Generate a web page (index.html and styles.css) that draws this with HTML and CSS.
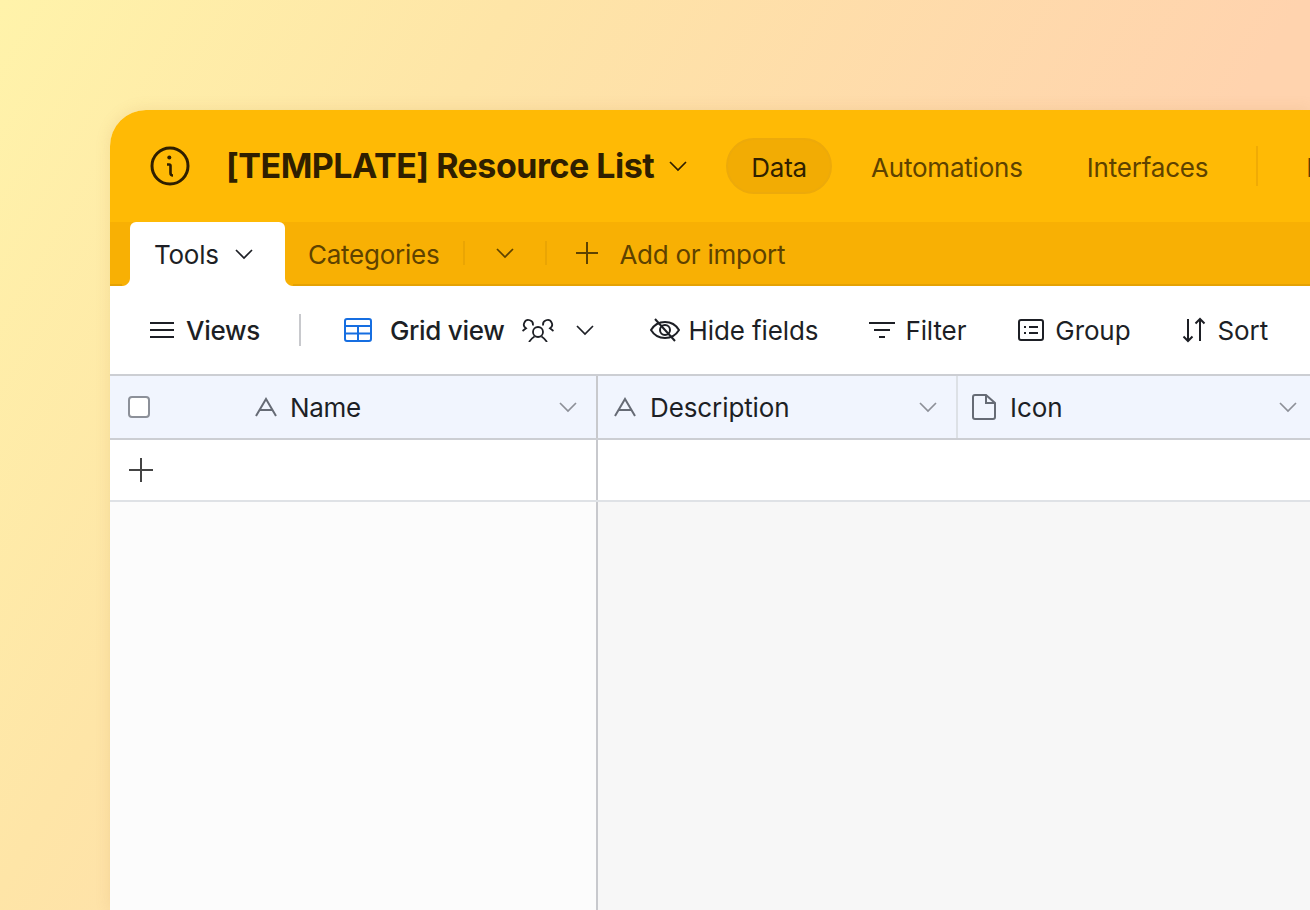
FILE: index.html
```html
<!DOCTYPE html>
<html lang="en">
<head>
    <meta charset="UTF-8">
    <title>[TEMPLATE] Resource List</title>
    <link rel="stylesheet" href="styles.css">
</head>
<body>
    <div class="app">
        <div class="topbar">
            <svg class="info-icon" width="40" height="40" viewBox="0 0 40 40" fill="none" stroke="#2f1f00" stroke-width="3"><circle cx="20" cy="20" r="18"/><path d="M17 18.500h2.300a1.200 1.200 0 0 1 1.200 1.200V27a2.500 2.500 0 0 0 2.500 2.500" stroke-width="2.600"/><circle cx="19.300" cy="11.500" r="2" fill="#2f1f00" stroke="none"/></svg>
            <h1 class="base-name">[TEMPLATE] Resource List</h1>
            <svg class="chev title-chev" width="20" height="12" viewBox="0 0 20 12"><path d="M2 2l8 8 8-8"/></svg>
            <nav class="top-nav">
                <a class="top-link active">Data</a>
                <a class="top-link">Automations</a>
                <a class="top-link">Interfaces</a>
                <span class="top-sep"></span>
                <a class="top-link">Forms</a>
            </nav>
        </div>
        <div class="tabbar">
            <div class="tab"><span>Tools</span> <svg class="chev" width="20" height="12" viewBox="0 0 20 12"><path d="M2 2l8 8 8-8"/></svg></div>
            <div class="tab-link tab-text">Categories</div>
            <span class="tab-sep"></span>
            <svg class="chev tab-more" width="20" height="12" viewBox="0 0 20 12"><path d="M2 2l8 8 8-8"/></svg>
            <span class="tab-sep"></span>
            <div class="tab-add">
                <svg width="24" height="24" viewBox="0 0 24 24" fill="none" stroke="#5e4200" stroke-width="2"><path d="M12 1v22M1 12h22"/></svg>
                <span class="tab-text">Add or import</span>
            </div>
        </div>
        <div class="toolbar">
            <div class="tool views">
                <svg width="24" height="18" viewBox="0 0 24 18" fill="none" stroke="#1d1f25" stroke-width="2"><path d="M0 2h24M0 9h24M0 16h24"/></svg>
                <b>Views</b>
            </div>
            <span class="tool-sep"></span>
            <div class="tool gridview">
                <svg width="28" height="24" viewBox="0 0 28 24" fill="none" stroke="#166ee1" stroke-width="2"><rect x="1" y="1" width="26" height="22" rx="2"/><path d="M1 8h26M1 15.500h26M14 8v15"/></svg>
                <b>Grid view</b>
                <svg class="people" width="32" height="24" viewBox="0 0 32 24" fill="none" stroke="#1d1f25" stroke-width="1.800"><circle cx="16" cy="14" r="5"/><path d="M7 24c1.500-2 3-4 5.500-5.500M25 24c-1.500-2-3-4-5.500-5.500M10.800 7.500A4.500 4.500 0 1 0 4 10.300L0.500 13M21.200 7.500A4.500 4.500 0 1 1 28 10.300L31.500 13"/></svg>
                <svg class="chev people-chev" width="20" height="12" viewBox="0 0 20 12"><path d="M2 2l8 8 8-8"/></svg>
            </div>
            <div class="tool hide">
                <svg width="30" height="26" viewBox="0 0 30 26" fill="none" stroke="#1d1f25" stroke-width="2"><path d="M1 13C4 8 9 5 15 5s11 3 14 8c-3 5-8 8-14 8S4 18 1 13z"/><circle cx="15" cy="13" r="5"/><path d="M5 2l20 22"/></svg>
                Hide fields
            </div>
            <div class="tool filter">
                <svg width="28" height="20" viewBox="0 0 28 20" fill="none" stroke="#1d1f25" stroke-width="2"><path d="M1 3h26M6 10h16M11 17h6"/></svg>
                Filter
            </div>
            <div class="tool group">
                <svg width="26" height="24" viewBox="0 0 26 24" fill="none" stroke="#1d1f25" stroke-width="2"><rect x="1" y="2" width="24" height="20" rx="2"/><path d="M6 9h2M6 15h2M11 9h9M11 15h9"/></svg>
                Group
            </div>
            <div class="tool sort">
                <svg width="24" height="26" viewBox="0 0 24 26" fill="none" stroke="#1d1f25" stroke-width="2"><path d="M6 2v22M1.500 19.500L6 24l4.500-4.500M18 24V2M13.500 6.500L18 2l4.500 4.500"/></svg>
                Sort
            </div>
        </div>
        <div class="grid-head">
            <div class="col col-name">
                <span class="checkbox"></span>
                <svg class="letter" width="22" height="20" viewBox="0 0 22 20" fill="none" stroke="#666b75" stroke-width="2"><path d="M1 19L11 2l10 17M5 13h12"/></svg>
                <span class="col-title">Name</span>
                <svg class="chev col-chev" width="20" height="12" viewBox="0 0 20 12"><path d="M2 2l8 8 8-8"/></svg>
            </div>
            <div class="col col-desc">
                <svg class="letter" width="22" height="20" viewBox="0 0 22 20" fill="none" stroke="#666b75" stroke-width="2"><path d="M1 19L11 2l10 17M5 13h12"/></svg>
                <span class="col-title">Description</span>
                <svg class="chev col-chev" width="20" height="12" viewBox="0 0 20 12"><path d="M2 2l8 8 8-8"/></svg>
            </div>
            <div class="col col-icon">
                <svg class="letter" width="24" height="26" viewBox="0 0 24 26" fill="none" stroke="#666b75" stroke-width="2"><path d="M3 1h11l9 8v14a2 2 0 0 1-2 2H3a2 2 0 0 1-2-2V3a2 2 0 0 1 2-2zM14 1v8h9"/></svg>
                <span class="col-title">Icon</span>
                <svg class="chev col-chev" width="20" height="12" viewBox="0 0 20 12"><path d="M2 2l8 8 8-8"/></svg>
            </div>
        </div>
        <div class="add-row">
            <div class="add-cell">
                <svg width="24" height="24" viewBox="0 0 24 24" fill="none" stroke="#444" stroke-width="2"><path d="M12 0v24M0 12h24"/></svg>
            </div>
        </div>
        <div class="empty">
            <div class="empty-left"></div>
            <div class="empty-right"></div>
        </div>
    </div>
</body>
</html>
```

FILE: styles.css
```css
html, body {
    height: 100%;
}
body {
    margin: 0;
    padding: 110px 0 0 110px;
    box-sizing: border-box;
    overflow: hidden;
    background: linear-gradient(120deg, #fff3aa 0%, #fee5a7 28%, #ffd3ae 71%, #ffd3ae 100%);
    font-family: Inter, "Noto Sans", sans-serif;
    font-size: 26px;
    letter-spacing: -0.1px;
    color: #1d1f25;
}
.app {
    width: 1200px;
    height: 800px;
    display: flex;
    flex-direction: column;
    background: #fff;
    border-top-left-radius: 36px;
    box-shadow: 0 0 16px rgba(180, 120, 40, 0.14);
}
svg {
    flex: none;
}
.chev {
    fill: none;
    stroke: #1d1f25;
    stroke-width: 1.7;
}

/* top bar */
.topbar {
    height: 112px;
    flex: none;
    display: flex;
    align-items: center;
    background: #ffba05;
    border-top-left-radius: 36px;
    padding-left: 40px;
    color: #2f1f00;
    white-space: nowrap;
    overflow: hidden;
}
.info-icon {
    margin-right: 36px;
}
.base-name {
    margin: 0 0 2px;
    font-size: 34px;
    font-weight: 700;
    letter-spacing: -0.5px;
    color: #2f1f00;
}
.title-chev {
    margin-left: 14px;
    stroke: #2f1f00;
}
.top-nav {
    display: flex;
    align-items: center;
    margin-left: 38px;
}
.top-link {
    padding: 0 24px;
    height: 56px;
    line-height: 60px;
    margin-right: 16px;
    letter-spacing: -0.2px;
    color: #5e4200;
    box-sizing: border-box;
}
.top-link.active {
    color: #2f1f00;
    background: #f2ac04;
    border: 2px solid #edaa0a;
    border-radius: 28px;
    line-height: 55px;
    padding: 0 23px 0 23px;
    margin-right: 15px;
}
.top-sep {
    width: 2px;
    height: 40px;
    background: #f0ab05;
    margin: 0 24px 0 8px;
}

/* table tabs */
.tabbar {
    height: 64px;
    flex: none;
    display: flex;
    align-items: center;
    background: #f8b004;
    border-bottom: 2px solid #e5a204;
    box-sizing: border-box;
    padding-left: 20px;
    color: #5e4200;
    white-space: nowrap;
}
.tab-text {
    padding-top: 2px;
    letter-spacing: -0.25px;
}
.tab {
    position: relative;
    align-self: stretch;
    width: 155px;
    margin-bottom: -2px;
    box-sizing: border-box;
    display: flex;
    align-items: center;
    gap: 15px;
    padding-left: 24px;
    background: #fff;
    border-radius: 6px 6px 0 0;
    letter-spacing: -0.25px;
    color: #1d1f25;
}
.tab::before,
.tab::after {
    content: "";
    position: absolute;
    bottom: 0;
    width: 8px;
    height: 8px;
}
.tab::before {
    left: -8px;
    background: radial-gradient(circle at 0 0, #f8b004 7.5px, #fff 8.5px);
}
.tab::after {
    right: -8px;
    background: radial-gradient(circle at 100% 0, #f8b004 7.5px, #fff 8.5px);
}
.tab-link {
    margin-left: 23px;
    margin-right: 24px;
}
.tab-sep {
    width: 2px;
    height: 24px;
    background: #eaa504;
}
.tab-more {
    margin: 0 30px;
    stroke: #5e4200;
}
.tab-add {
    display: flex;
    align-items: center;
    gap: 20px;
    margin-left: 28px;
}

/* view toolbar */
.toolbar {
    flex: none;
    display: flex;
    align-items: center;
    padding-left: 40px;
    border-bottom: 2px solid #ccced3;
    height: 88px;
    white-space: nowrap;
}
.tool {
    display: flex;
    align-items: center;
}
.tool b {
    font-weight: 500;
    letter-spacing: -0.3px;
}
.views {
    gap: 12px;
}
.tool-sep {
    width: 2px;
    height: 32px;
    background: #c8c9cd;
    margin: 0 43px 0 39px;
}
.gridview {
    gap: 18px;
    margin-right: 55px;
}
.gridview .people-chev {
    margin-left: 3px;
}
.hide {
    gap: 8px;
    margin-right: 50px;
}
.filter {
    gap: 9px;
    margin-right: 52px;
}
.group {
    gap: 11px;
    margin-right: 52px;
}
.sort {
    gap: 11px;
}

/* grid */
.grid-head {
    height: 62px;
    flex: none;
    display: flex;
    background: #f1f5fe;
    border-bottom: 2px solid #ccced3;
}
.col {
    display: flex;
    align-items: center;
    box-sizing: border-box;
    border-right: 2px solid #dde1e6;
}
.col-name {
    width: 488px;
    border-right: 2px solid #c8c9cd;
    padding-left: 18px;
}
.col-desc {
    width: 360px;
    padding-left: 16px;
}
.col-icon {
    width: 352px;
    padding-left: 14px;
    border-right: none;
}
.checkbox {
    width: 22px;
    height: 22px;
    margin-right: 105px;
    box-sizing: border-box;
    background: #fff;
    border: 2px solid #8c9099;
    border-radius: 4px;
}
.col-title {
    margin-left: 14px;
}
.col-name .col-title {
    margin-left: 13px;
    letter-spacing: -0.3px;
}
.col-chev {
    margin-left: auto;
    margin-right: 18px;
    stroke: #8d9098;
}
.col-icon .col-chev {
    margin-right: 12px;
}
.add-row {
    height: 60px;
    flex: none;
    background: #fff;
    border-bottom: 2px solid #dfe2e6;
}
.add-cell {
    width: 488px;
    height: 100%;
    box-sizing: border-box;
    padding-left: 19px;
    display: flex;
    align-items: center;
    border-right: 2px solid #c8c9cd;
}
.empty {
    flex: 1;
    display: flex;
}
.empty-left {
    width: 488px;
    box-sizing: border-box;
    background: #fcfcfc;
    border-right: 2px solid #c8c9cd;
}
.empty-right {
    flex: 1;
    background: #f7f7f7;
}
```
